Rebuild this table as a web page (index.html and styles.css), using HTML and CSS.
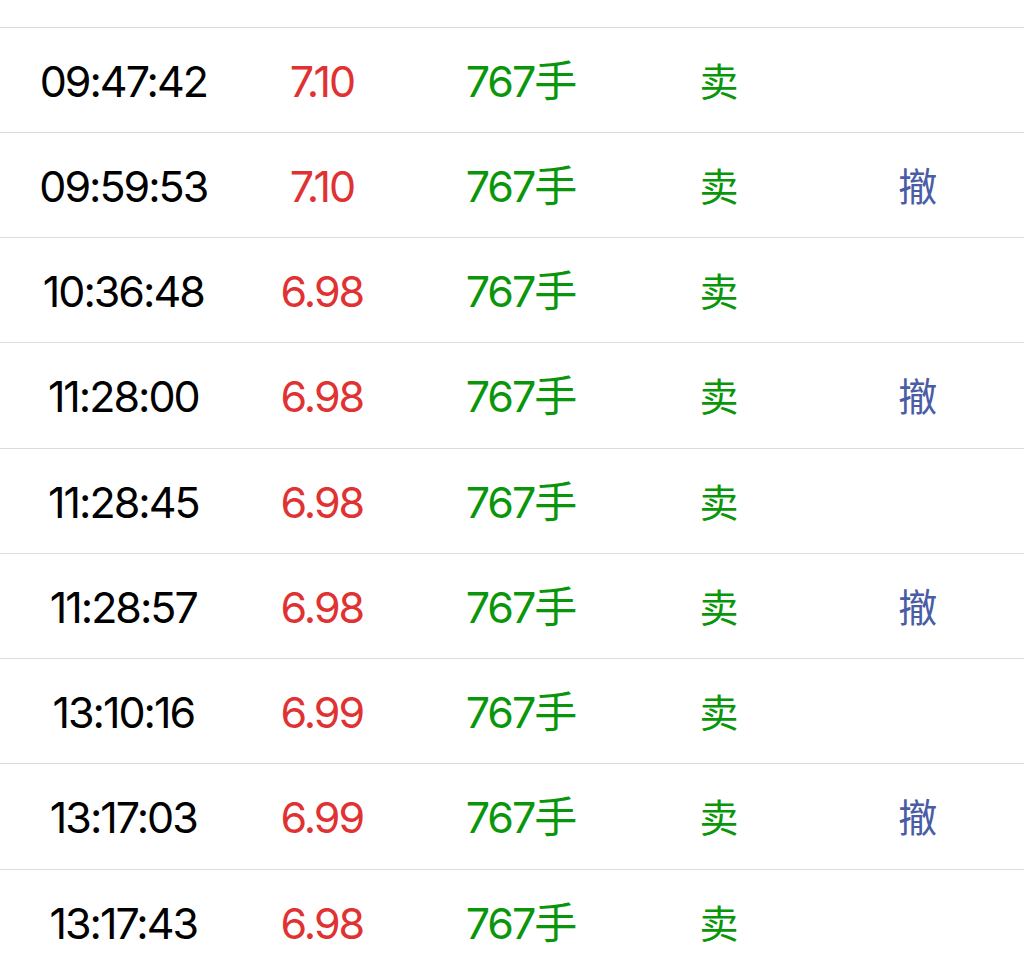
FILE: index.html
```html
<!DOCTYPE html>
<html lang="zh-CN">
<head>
<meta charset="utf-8">
<title>委托记录</title>
<link rel="stylesheet" href="styles.css">
</head>
<body>
<div class="list">
  <div class="row row-top"></div>
  <div class="row"><span class="time">09:47:42</span><span class="price">7.10</span><span class="vol">767手</span><span class="side">卖</span><span class="act"></span></div>
  <div class="row"><span class="time">09:59:53</span><span class="price">7.10</span><span class="vol">767手</span><span class="side">卖</span><span class="act">撤</span></div>
  <div class="row"><span class="time">10:36:48</span><span class="price">6.98</span><span class="vol">767手</span><span class="side">卖</span><span class="act"></span></div>
  <div class="row"><span class="time">11:28:00</span><span class="price">6.98</span><span class="vol">767手</span><span class="side">卖</span><span class="act">撤</span></div>
  <div class="row"><span class="time">11:28:45</span><span class="price">6.98</span><span class="vol">767手</span><span class="side">卖</span><span class="act"></span></div>
  <div class="row"><span class="time">11:28:57</span><span class="price">6.98</span><span class="vol">767手</span><span class="side">卖</span><span class="act">撤</span></div>
  <div class="row"><span class="time">13:10:16</span><span class="price">6.99</span><span class="vol">767手</span><span class="side">卖</span><span class="act"></span></div>
  <div class="row"><span class="time">13:17:03</span><span class="price">6.99</span><span class="vol">767手</span><span class="side">卖</span><span class="act">撤</span></div>
  <div class="row"><span class="time">13:17:43</span><span class="price">6.98</span><span class="vol">767手</span><span class="side">卖</span><span class="act"></span></div>
</div>
</body>
</html>
```
FILE: styles.css
```css
html, body {
  margin: 0;
  padding: 0;
  background: #ffffff;
  overflow: hidden;
}
body {
  font-family: Inter, "Noto Sans CJK SC", "Noto Sans", sans-serif;
  width: 1024px;
  height: 974px;
}
.list {
  display: flex;
  flex-direction: column;
}
.row {
  display: grid;
  grid-template-columns: repeat(5, 198.6px);
  padding-left: 24px;
  padding-top: 3px;
  box-sizing: border-box;
  align-items: center;
  height: 105.25px;
  border-bottom: 1px solid #dcdcdc;
  font-size: 43px;
  letter-spacing: -2px;
  line-height: 1;
  flex-shrink: 0;
}
.row-top {
  height: 27.5px;
  padding-top: 0;
}
.row span {
  text-align: center;
  white-space: nowrap;
}
.time { color: #000000; }
.price { color: #e03232; }
.vol { color: #0a960a; }
.side { color: #0a960a; font-size: 39px; letter-spacing: 0; }
.act { color: #4a5ca6; font-size: 39px; letter-spacing: 0; }
```
